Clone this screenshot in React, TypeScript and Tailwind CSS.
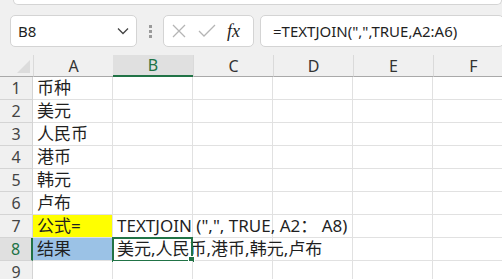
import React from 'react';

const font = { fontFamily: '"Noto Sans", "Noto Sans CJK SC", sans-serif' };

const cols = ['A', 'B', 'C', 'D', 'E', 'F'];

const rows: { a?: string; b?: string; aCls?: string }[] = [
    { a: '币种' },
    { a: '美元' },
    { a: '人民币' },
    { a: '港币' },
    { a: '韩元' },
    { a: '卢布' },
    { a: '公式=', b: 'TEXTJOIN (",", TRUE, A2： A8)', aCls: 'bg-[#ffff00]' },
    { a: '结果', b: '美元,人民币,港币,韩元,卢布', aCls: 'bg-[#9bc2e6]' },
    {},
];

const App = () => {
    return (
        <div className="w-[502px] h-[279px] overflow-hidden bg-[#f0f0f0] text-[#1f1f1f]" style={font}>
            {/* ribbon bottom edge */}
            <div className="ml-[13px] h-[5px] bg-white border border-t-0 border-[#d4d4d4] rounded-b-[5px]"></div>

            {/* formula bar */}
            <div className="flex items-center h-[32px] mt-[10px] pl-[10px]">
                <div className="w-[127px] h-[32px] bg-white border border-[#d4d4d4] rounded-[5px] flex items-center justify-between pl-[7px] pr-[7px]">
                    <span className="text-[15px]">B8</span>
                    <svg width="12" height="8" viewBox="0 0 12 8" fill="none" stroke="#444" strokeWidth="1.3">
                        <path d="M1 1.5 L6 6.5 L11 1.5" />
                    </svg>
                </div>
                <div className="w-[26px] flex flex-col items-center gap-[2px]">
                    <div className="w-[3px] h-[3px] bg-[#9a9a9a]"></div>
                    <div className="w-[3px] h-[3px] bg-[#9a9a9a]"></div>
                    <div className="w-[3px] h-[3px] bg-[#9a9a9a]"></div>
                </div>
                <div className="w-[91px] h-[32px] bg-white border border-[#d4d4d4] rounded-[5px] flex items-center pl-[7px] gap-[11px]">
                    <svg width="16" height="16" viewBox="0 0 16 16" stroke="#b5b5b5" strokeWidth="1.3">
                        <path d="M2 2 L14 14 M14 2 L2 14" />
                    </svg>
                    <svg width="18" height="14" viewBox="0 0 18 14" fill="none" stroke="#b5b5b5" strokeWidth="1.3">
                        <path d="M1 7 L6 12 L17 1" />
                    </svg>
                    <span className="text-[18px] italic" style={{ fontFamily: '"Liberation Serif", serif' }}>fx</span>
                </div>
                <div className="ml-[6px] flex-1 h-[32px] bg-white border border-[#d4d4d4] rounded-[5px] flex items-center pl-[12px] -mr-[2px]">
                    <span className="text-[15px]">=TEXTJOIN(",",TRUE,A2:A6)</span>
                </div>
            </div>

            {/* grid */}
            <div className="mt-[8px] grid grid-cols-[33px_80px_80px_80px_80px_80px_80px] grid-rows-[22px] auto-rows-[23px]">
                {/* header row */}
                <div className="relative bg-[#f0f0f0] border-b border-[#a9a9a9]">
                    <div className="absolute right-[3px] bottom-[3px] w-0 h-0 border-l-[13px] border-l-transparent border-b-[13px] border-b-[#dcdcdc]"></div>
                </div>
                {cols.map((c) => (
                    <div
                        key={c}
                        className={
                            c === 'B'
                                ? 'bg-[#e0e0e0] border-b-2 border-[#217346] text-[#217346] text-[16px] flex items-center justify-center leading-none'
                                : 'bg-[#f0f0f0] border-b border-l border-l-[#dadada] border-b-[#a9a9a9] text-[16px] flex items-center justify-center leading-none text-[#333]'
                        }
                    >
                        {c}
                    </div>
                ))}

                {rows.map((r, i) => {
                    const n = i + 1;
                    const sel = n === 8;
                    return (
                        <React.Fragment key={n}>
                            <div
                                className={
                                    sel
                                        ? 'bg-[#e0e0e0] border-r-2 border-r-[#217346] border-b border-b-[#d4d4d4] text-[#217346] text-[16px] flex items-center justify-center'
                                        : 'bg-[#f0f0f0] border-r border-r-[#d4d4d4] border-b border-b-[#d4d4d4] text-[16px] text-[#444] flex items-center justify-center'
                                }
                            >
                                {n}
                            </div>
                            <div className={`border-r border-b border-[#e1e1e1] text-[17px] pl-[4px] flex items-center whitespace-nowrap ${r.aCls ?? 'bg-white'}`}>
                                {r.a}
                            </div>
                            <div className="relative bg-white border-r border-b border-[#e1e1e1] text-[17px] pl-[4px] flex items-center whitespace-nowrap overflow-visible z-10">
                                {r.b}
                                {sel && (
                                    <>
                                        <div className="absolute -left-[1px] -top-[1px] w-[81px] h-[25px] border-2 border-[#217346] pointer-events-none"></div>
                                        <div className="absolute -right-[3px] -bottom-[3px] w-[5px] h-[5px] bg-[#217346] border border-white box-content"></div>
                                    </>
                                )}
                            </div>
                            <div className="bg-white border-r border-b border-[#e1e1e1]"></div>
                            <div className="bg-white border-r border-b border-[#e1e1e1]"></div>
                            <div className="bg-white border-r border-b border-[#e1e1e1]"></div>
                            <div className="bg-white border-r border-b border-[#e1e1e1]"></div>
                        </React.Fragment>
                    );
                })}
            </div>
        </div>
    );
};

export default App;
